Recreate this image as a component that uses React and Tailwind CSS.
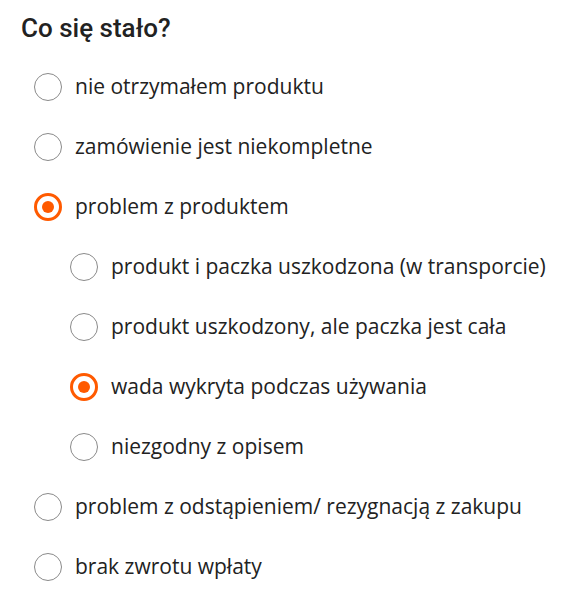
import React from "react";

const Radio = ({ checked }) => (
  <span
    className={
      "flex h-[28px] w-[28px] shrink-0 items-center justify-center rounded-full " +
      (checked ? "border-[3px] border-[#ff5a00]" : "border-[1.5px] border-[#8a8a8a]")
    }
  >
    {checked && <span className="h-[12px] w-[12px] rounded-full bg-[#ff5a00]" />}
  </span>
);

const Row = ({ label, checked, nested }) => (
  <div className={"flex h-[60px] items-center gap-[13px] " + (nested ? "pl-[70px]" : "pl-[34px]")}>
    <Radio checked={checked} />
    <span className="text-[21px] text-[#222]" style={{ fontFamily: '"Open Sans", sans-serif' }}>
      {label}
    </span>
  </div>
);

export default function App() {
  return (
    <div className="h-[613px] w-[580px] bg-white">
      <h1
        className="pl-[21px] pt-[12px] text-[26px] leading-[32px] font-medium text-[#222]"
        style={{ fontFamily: "Roboto, sans-serif" }}
      >
        Co się stało?
      </h1>
      <div className="mt-[13px]">
        <Row label="nie otrzymałem produktu" />
        <Row label="zamówienie jest niekompletne" />
        <Row label="problem z produktem" checked />
        <Row label="produkt i paczka uszkodzona (w transporcie)" nested />
        <Row label="produkt uszkodzony, ale paczka jest cała" nested />
        <Row label="wada wykryta podczas używania" nested checked />
        <Row label="niezgodny z opisem" nested />
        <Row label="problem z odstąpieniem/ rezygnacją z zakupu" />
        <Row label="brak zwrotu wpłaty" />
      </div>
    </div>
  );
}
